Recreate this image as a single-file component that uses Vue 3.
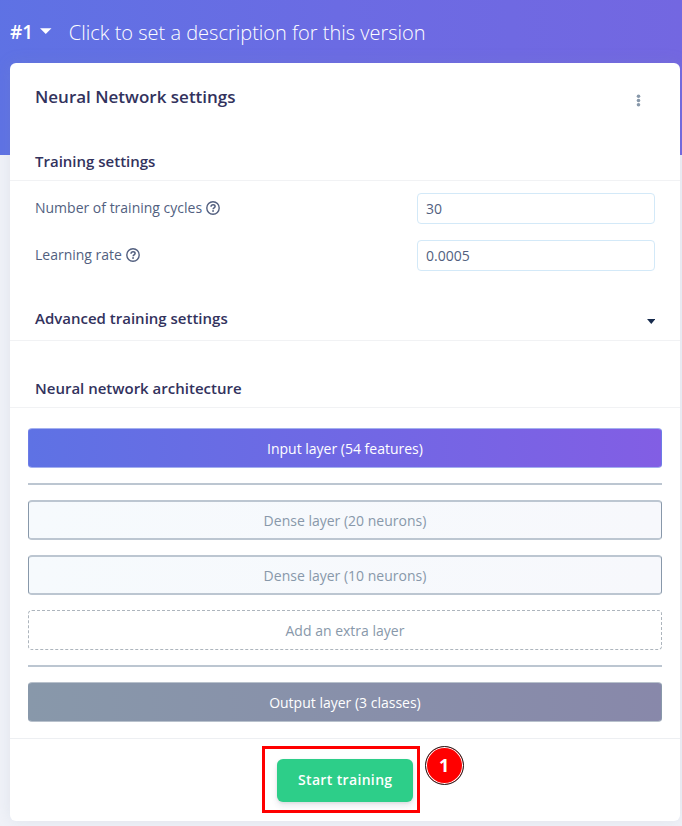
<script setup>
import { ref } from 'vue'

const fields = ref([
  { label: 'Number of training cycles', value: '30' },
  { label: 'Learning rate', value: '0.0005' },
])
const denseLayers = [20, 10]
</script>

<template>
  <div class="page">
    <header class="version">
      <span class="number">#1</span>
      <svg class="version-caret" viewBox="0 0 12 6"><path d="M0 0h12L6 6z" fill="#fff" /></svg>
      <span class="description">Click to set a description for this version</span>
    </header>

    <main class="card">
      <div class="card-header">
        <h1>Neural Network settings</h1>
        <svg class="dots" viewBox="0 0 5 13" fill="#8898aa">
          <circle cx="2.5" cy="2.2" r="1.8" />
          <circle cx="2.5" cy="6.5" r="1.8" />
          <circle cx="2.5" cy="10.8" r="1.8" />
        </svg>
      </div>

      <h2 class="training">Training settings</h2>
      <div class="fields">
        <label v-for="field in fields" :key="field.label" class="field">
          <span class="field-name">
            {{ field.label }}
            <svg class="help" viewBox="0 0 14 14" fill="none" stroke="#525f7f">
              <circle cx="7" cy="7" r="6.2" stroke-width="1.4" />
              <path d="M5 5.7C5.1 4.4 6 3.8 7.1 3.8c1.1 0 2 .6 2 1.7 0 1.4-2 1.4-2 2.7" stroke-width="1.5" />
              <circle cx="7.05" cy="10" r=".9" fill="#525f7f" stroke="none" />
            </svg>
          </span>
          <input v-model="field.value" type="text" />
        </label>
      </div>

      <h2 class="advanced">
        <span>Advanced training settings</span>
        <svg class="caret" viewBox="0 0 8.4 5"><path d="M0 0h8.4L4.2 5z" fill="#172b4d" /></svg>
      </h2>

      <h2 class="architecture">Neural network architecture</h2>
      <div class="layers">
        <div class="layer input-layer">Input layer (54 features)</div>
        <hr />
        <div v-for="count in denseLayers" :key="count" class="layer dense">Dense layer ({{ count }} neurons)</div>
        <div class="layer add">Add an extra layer</div>
        <hr />
        <div class="layer output-layer">Output layer (3 classes)</div>
      </div>

      <footer class="card-footer">
        <div class="highlight">
          <button type="button">Start training</button>
          <span class="step">1</span>
        </div>
      </footer>
    </main>
  </div>
</template>

<style>
body {
  margin: 0;
  background: #f0f2f8;
}
</style>

<style scoped>
* {
  box-sizing: border-box;
}
.page {
  height: 826px;
  overflow: hidden;
  padding: 0 2.5px 0 10.4px;
  font-family: "Open Sans", sans-serif;
  color: #525f7f;
  background: linear-gradient(87deg, #5e72e4 0%, #6b6be3 50%, #7367e1 100%) 0 0 / 100% 155px no-repeat, #f0f2f8;
}
.version {
  display: flex;
  align-items: center;
  height: 63px;
  padding-top: 1px;
  color: #fff;
  font-size: 20px;
}
.number {
  width: 30px;
  margin-left: -0.4px;
  font-size: 19px;
  font-weight: 600;
}
.version-caret {
  width: 11.5px;
  height: 6px;
  margin-right: 17.3px;
  margin-bottom: 2px;
}
.description {
  font-weight: 300;
  white-space: nowrap;
}
.card {
  height: 758px;
  background: #fff;
  border-radius: 6px;
  box-shadow: 0 0 16px rgba(136, 152, 170, 0.15);
}
.card-header {
  display: flex;
  justify-content: space-between;
  height: 79px;
  padding: 22px 38.1px 0 24.6px;
}
h1,
h2 {
  margin: 0;
  font-weight: 600;
  color: #32325d;
}
h1 {
  font-size: 17px;
  line-height: 24px;
}
.dots {
  width: 5px;
  height: 13px;
  margin-top: 9px;
}
h2 {
  display: flex;
  justify-content: space-between;
  align-items: flex-end;
  padding: 0 24.3px 8px 24.6px;
  border-bottom: 1px solid #f1f2f4;
  font-size: 15px;
  line-height: 22px;
}
.training {
  height: 39px;
}
.fields {
  display: grid;
  gap: 16px;
  height: 127px;
  padding: 12px 24.5px 0 24.6px;
  align-content: start;
}
.field {
  display: flex;
  align-items: center;
  height: 31px;
  font-size: 14px;
}
.field-name {
  display: flex;
  align-items: center;
  gap: 4px;
  padding-bottom: 2px;
}
.help {
  width: 14px;
  height: 14px;
}
input {
  width: 238px;
  height: 31px;
  margin-left: auto;
  padding: 0 8px 1px;
  border: 1px solid #d3e9f8;
  border-radius: 4px;
  font: 14px "Open Sans", sans-serif;
  color: #525f7f;
  background: #fff;
}
.advanced {
  height: 33px;
  padding-bottom: 11px;
}
.caret {
  width: 8.5px;
  height: 5px;
  margin-bottom: 5px;
}
.architecture {
  height: 67px;
}
.layers {
  display: flex;
  flex-direction: column;
  gap: 15px;
  height: 330px;
  padding: 20px 17.6px 0;
}
.layer {
  display: flex;
  align-items: center;
  justify-content: center;
  flex: 0 0 40px;
  border: 1px solid #8898aa;
  border-radius: 4px;
  font-size: 14px;
  color: #8898aa;
}
.input-layer {
  border-color: #a3b0ef #6c7ce6;
  color: #fff;
  background: linear-gradient(87deg, #5e72e4, #825ee4);
}
.dense {
  border-width: 2px 1px;
  border-color: #bcc6d1 #8898aa;
  background: linear-gradient(87deg, #f6fafd, #f7f8fc);
}
.add {
  border-style: dashed;
  border-color: #adb5bd;
}
.output-layer {
  border-color: #b8c1cc #8898aa;
  color: #fff;
  background: linear-gradient(87deg, #8898aa, #8888aa);
}
hr {
  flex: 0 0 2px;
  width: 100%;
  margin: 0;
  border: 0;
  background: #bcc6d1;
}
.card-footer {
  display: flex;
  padding: 6.6px 0 0 251.2px;
  border-top: 1px solid #edeff2;
}
.highlight {
  position: relative;
  width: 158px;
  height: 67px;
  padding: 10px 0 0 12.4px;
  border: 3px solid #f00;
}
button {
  display: block;
  width: 136.5px;
  height: 43px;
  padding: 0 0 1px;
  border: 0;
  border-radius: 6px;
  font: 600 14px "Open Sans", sans-serif;
  letter-spacing: 0.35px;
  color: #fff;
  background: #2dce89;
  box-shadow: 0 4px 6px rgba(50, 50, 93, 0.11), 0 1px 3px rgba(0, 0, 0, 0.08);
}
.step {
  position: absolute;
  left: 160px;
  top: -3px;
  display: flex;
  align-items: center;
  justify-content: center;
  width: 39px;
  height: 39px;
  border: 1px solid #222;
  border-radius: 50%;
  box-shadow: inset 0 0 0 1px #fff;
  background: #f00;
  color: #fff;
  font: 700 18px "Noto Sans", sans-serif;
}
</style>
